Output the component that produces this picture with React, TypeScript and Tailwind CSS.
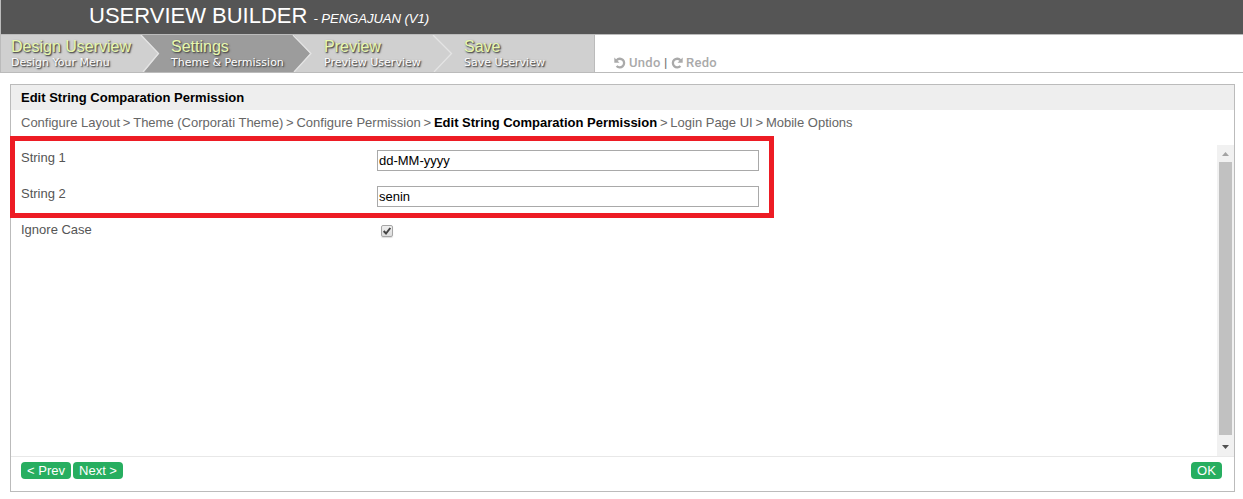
import React from "react";

const steps = [
  { title: "Design Userview", sub: "Design Your Menu", box: "w-[159px] pl-[10px]" },
  { title: "Settings", sub: "Theme & Permission", box: "w-[153px] pl-[11px]" },
  { title: "Preview", sub: "Preview Userview", box: "w-[141px] pl-[11px]" },
  { title: "Save", sub: "Save Userview", box: "w-[140px] pl-[10px]" },
];

function Steps() {
  return (
    <div className="relative flex h-[37px] w-[595px] border-l border-r border-[#bbb] bg-[#d0d0d0]">
      <svg className="absolute left-0 top-0" width="593" height="37" viewBox="1 0 593 37">
        <path d="M141 0H294L310 18.5L294 37H144L159 18.5Z" fill="#9c9c9c" />
        <path d="M141 0L158.500 18.500L143 37" fill="none" stroke="#e4e4e4" strokeWidth="1.3" />
        <path d="M293 0L311 18.500L294 37M433 0L451.500 18.500L434 37" fill="none" stroke="#e4e4e4" strokeWidth="1.3" />
      </svg>
      {steps.map((s) => (
        <div key={s.title} className={"relative whitespace-nowrap " + s.box}>
          <div className="mt-[3px] h-[17px] text-[16px] leading-[17px] text-[#e8f8ae] [text-shadow:1px_1px_1px_#555,1px_1px_2px_#555]">{s.title}</div>
          <div className="h-[14px] pt-px font-['DejaVu_Sans'] text-[11px] leading-[14px] text-white [text-shadow:1px_1px_1px_#555,1px_1px_2px_#555]">{s.sub}</div>
        </div>
      ))}
    </div>
  );
}

function HistoryIcon({ flip }: { flip?: boolean }) {
  return (
    <svg className={flip ? "h-3 w-3 -scale-x-100" : "h-3 w-3"} viewBox="0 0 12 12">
      <path d="M2.600 3.200A4.300 4.300 0 1 1 2.600 8.900" fill="none" stroke="currentColor" strokeWidth="2.300" />
      <path d="M0.300 0.500V5.700H5.500Z" fill="currentColor" />
    </svg>
  );
}

const crumb = "whitespace-nowrap";

function Field({ label, value }: { label: string; value: string }) {
  return (
    <div className="flex h-9">
      <label className="w-[356px] pt-[5px] leading-[15px]">{label}</label>
      <input
        defaultValue={value}
        className="mt-[5px] h-[21px] w-[382px] border border-[#a9a9a9] bg-white px-[1px] text-[13px] text-black"
      />
    </div>
  );
}

export default function App() {
  return (
    <div className="h-[499px] w-[1243px] overflow-hidden bg-white font-['Liberation_Sans',Arial,sans-serif] text-[13px] text-[#555]">
      <header className="flex h-[34px] items-baseline whitespace-nowrap border-l border-[#bbb] bg-[#555] pl-[88px] text-white">
        <h1 className="text-[22px] leading-[31px]">USERVIEW BUILDER</h1>
        <span className="ml-[6px] text-[13.200px] italic tracking-[-0.100px]">- PENGAJUAN (V1)</span>
      </header>
      <nav className="flex h-[39px] border-y border-[#bbb]">
        <Steps />
        <div className="mt-[20px] flex h-[16px] items-center pl-[19px] font-['Roboto'] text-[13px] font-medium leading-4 tracking-[0.300px] text-[#aaa]">
          <HistoryIcon />
          <span className="ml-[3px] w-[33px]">Undo</span>
          <span className="ml-[2px] w-[7px] font-bold text-[#777]">|</span>
          <HistoryIcon flip />
          <span className="ml-[3px]">Redo</span>
        </div>
      </nav>
      <main className="relative ml-[10px] mt-[11px] flex h-[408px] w-[1225px] flex-col border border-[#bbb]">
        <h2 className="h-[25px] shrink-0 bg-[#eee] pl-[10px] font-bold leading-[25px] text-black">Edit String Comparation Permission</h2>
        <div className="flex h-[35px] shrink-0 gap-[2.800px] pl-[10px] pt-[5px] leading-[15px] text-[#666]">
          <span className={crumb}>Configure Layout</span>
          <span>&gt;</span>
          <span className={crumb}>Theme (Corporati Theme)</span>
          <span>&gt;</span>
          <span className={crumb}>Configure Permission</span>
          <span>&gt;</span>
          <b className={crumb + " text-black"}>Edit String Comparation Permission</b>
          <span>&gt;</span>
          <span className={crumb}>Login Page UI</span>
          <span>&gt;</span>
          <span className={crumb}>Mobile Options</span>
        </div>
        <div className="flex h-[311px] shrink-0">
          <div className="flex-1 pl-[10px]">
            <Field label="String 1" value="dd-MM-yyyy" />
            <Field label="String 2" value="senin" />
            <div className="flex h-9">
              <span className="w-[356px] pt-[5px] leading-[15px]">Ignore Case</span>
              <span className="ml-[4px] mt-[8px] flex h-3 w-3 items-center justify-center rounded-[2px] border border-[#a6a6a6] bg-gradient-to-b from-[#eee] to-[#ddd] shadow-[0_1px_1px_#ddd]">
                <svg width="10" height="10" viewBox="0 0 10 10">
                  <path d="M1.700 5L4 7.500L8.300 2" fill="none" stroke="#444" strokeWidth="2" />
                </svg>
              </span>
            </div>
          </div>
          <div className="flex w-[17px] flex-col items-center bg-[#f1f1f1]">
            <svg width="17" height="17" viewBox="0 0 17 17"><path d="M5 11L8.500 7L12 11Z" fill="#a3a3a3" /></svg>
            <div className="h-[273px] w-[13px] bg-[#c1c1c1]" />
            <svg width="17" height="21" viewBox="0 0 17 21"><path d="M5 10L8.500 14L12 10Z" fill="#505050" /></svg>
          </div>
        </div>
        <footer className="flex flex-1 items-start gap-[2px] border-t border-[#e8e8e8] pl-[10px] pr-[12px] pt-[5px]">
          <button className="h-[17px] w-[50px] rounded-[4px] bg-[#27ae60] leading-[17px] text-white">&lt; Prev</button>
          <button className="h-[17px] w-[50px] rounded-[4px] bg-[#27ae60] leading-[17px] text-white">Next &gt;</button>
          <button className="ml-auto h-[17px] w-[31px] rounded-[4px] bg-[#27ae60] leading-[17px] text-white">OK</button>
        </footer>
        <div className="pointer-events-none absolute -left-px top-[51px] h-[82px] w-[764px] border-[5px] border-[#ed1c24]" />
      </main>
    </div>
  );
}
